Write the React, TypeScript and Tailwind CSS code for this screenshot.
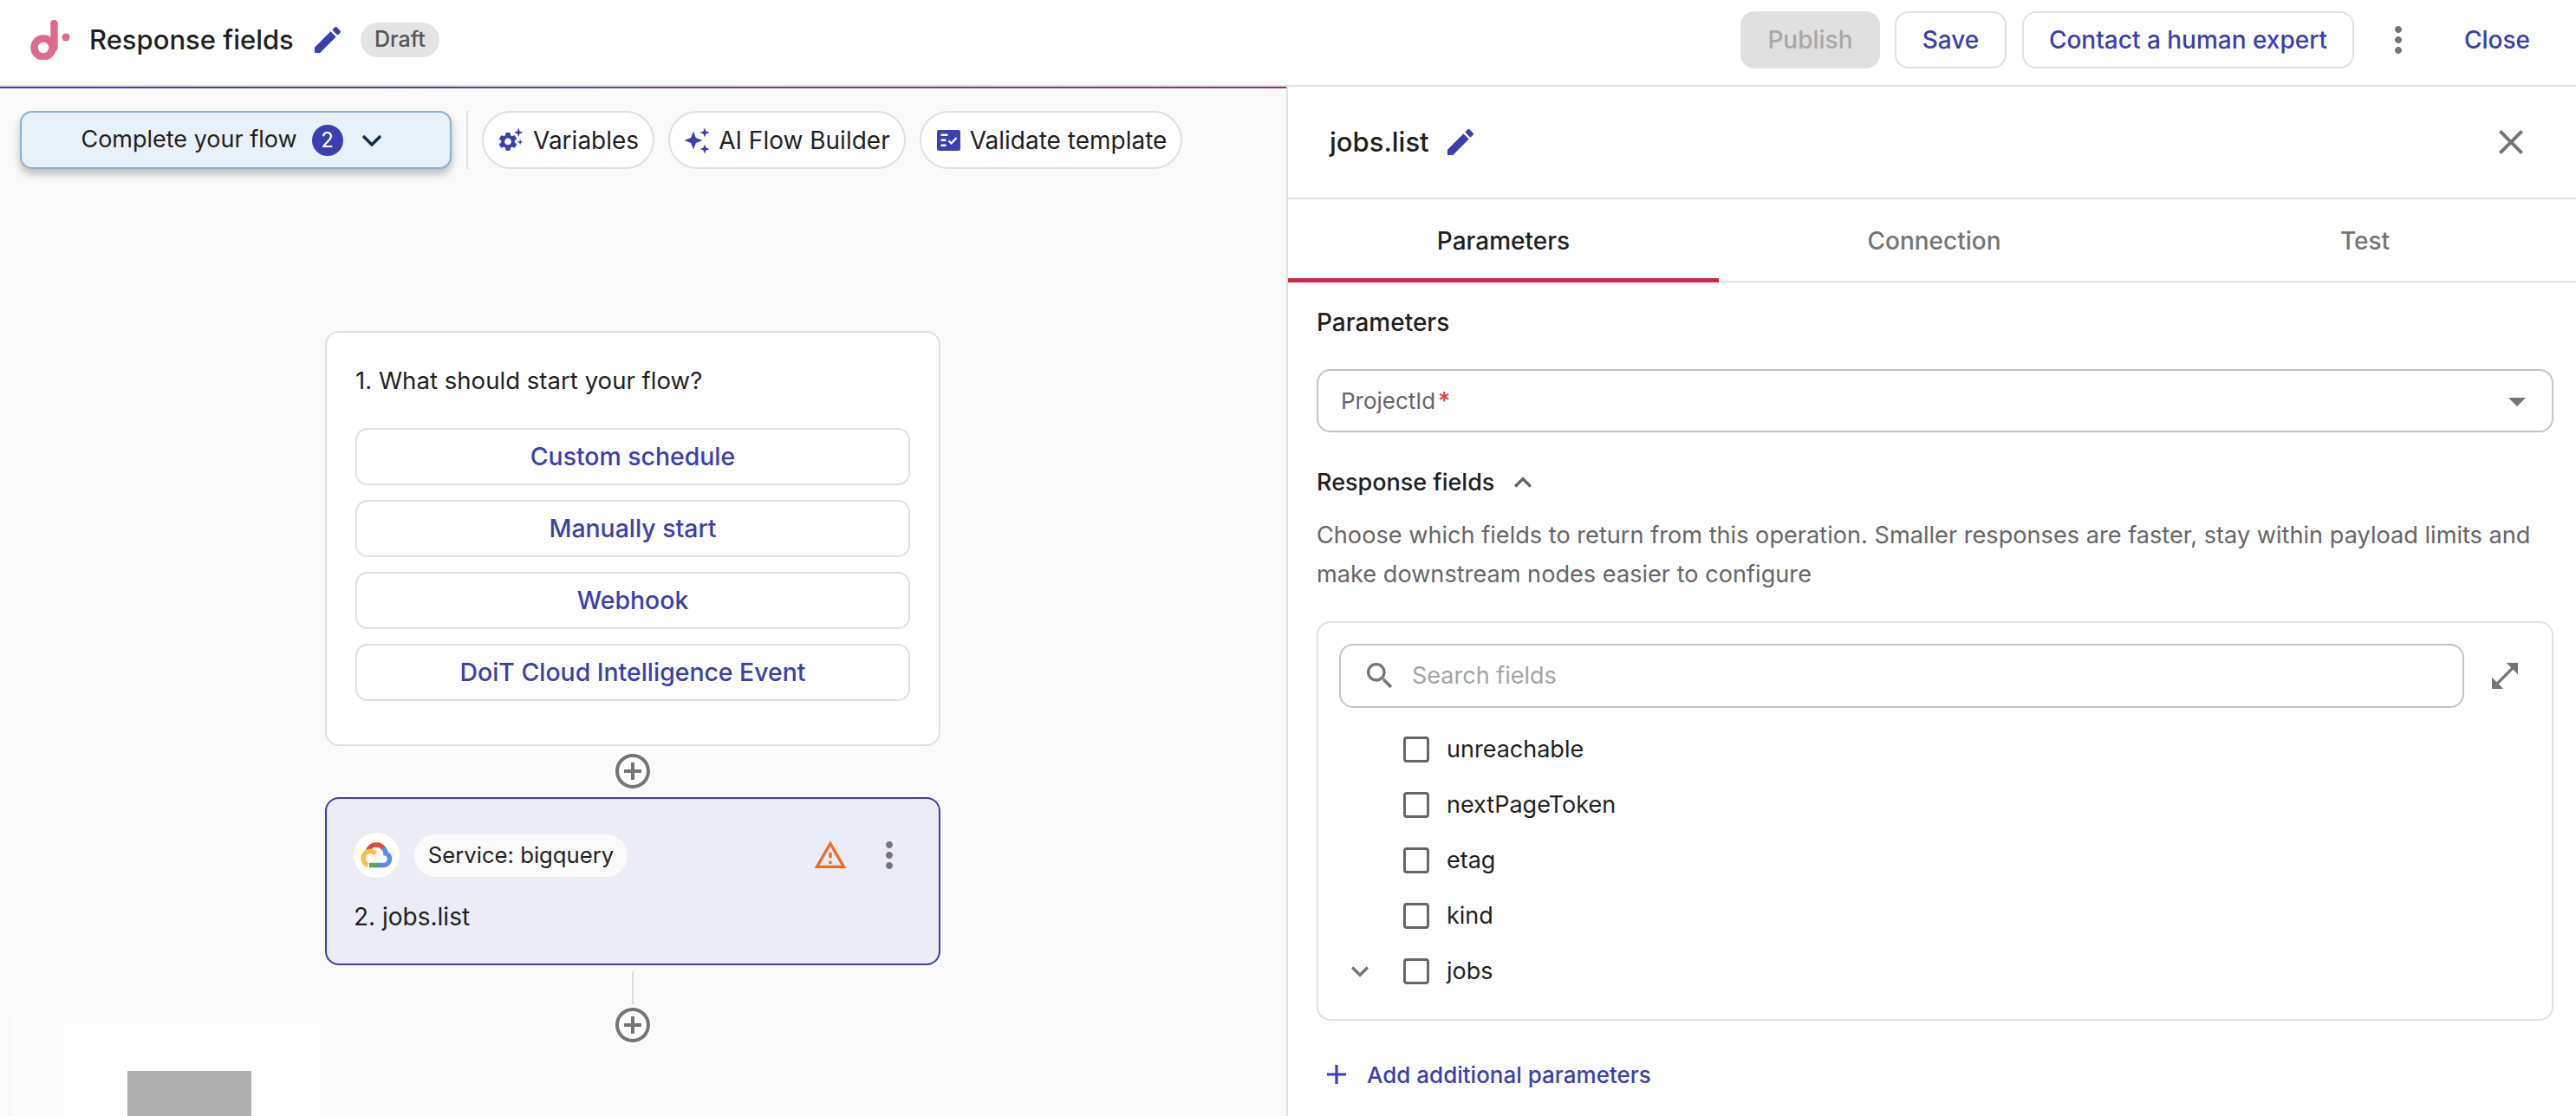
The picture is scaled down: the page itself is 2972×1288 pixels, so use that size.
import type { ReactNode } from "react";

const PATHS = {
  edit: "M3 17.25V21h3.75L17.81 9.94l-3.75-3.75L3 17.25zM20.71 7.04c.39-.39.39-1.02 0-1.41l-2.34-2.34c-.39-.39-1.02-.39-1.41 0l-1.83 1.83 3.75 3.75 1.83-1.83z",
  more: "M12 8c1.1 0 2-.9 2-2s-.9-2-2-2-2 .9-2 2 .9 2 2 2zm0 2c-1.1 0-2 .9-2 2s.9 2 2 2 2-.9 2-2-.9-2-2-2zm0 6c-1.1 0-2 .9-2 2s.9 2 2 2 2-.9 2-2-.9-2-2-2z",
  close: "M19 6.41 17.59 5 12 10.59 6.41 5 5 6.41 10.59 12 5 17.59 6.41 19 12 13.41 17.59 19 19 17.59 13.41 12z",
  full: "M21 11V3h-8l3.29 3.29-10 9.99L3 13v8h8l-3.29-3.29 10-9.99z",
  drop: "m7 10 5 5 5-5z",
  addCircle: "M13 7h-2v4H7v2h4v4h2v-4h4v-2h-4V7zm-1-5C6.48 2 2 6.48 2 12s4.48 10 10 10 10-4.48 10-10S17.52 2 12 2zm0 18c-4.41 0-8-3.59-8-8s3.59-8 8-8 8 3.59 8 8-3.59 8-8 8z",
  warn: "M12 5.99 19.53 19H4.47L12 5.99M12 2 1 21h22L12 2zm1 14h-2v2h2v-2zm0-6h-2v4h2v-4z",
  search: "M15.5 14h-.79l-.28-.27C15.41 12.59 16 11.11 16 9.5 16 5.91 13.09 3 9.5 3S3 5.91 3 9.5 5.91 16 9.5 16c1.61 0 3.09-.59 4.23-1.57l.27.28v.79l5 4.99L20.49 19l-4.99-5zm-6 0C7.01 14 5 11.99 5 9.5S7.01 5 9.5 5 14 7.01 14 9.5 11.99 14 9.5 14z",
  down: "M7.41 8.59 12 13.17l4.59-4.58L18 10l-6 6-6-6 1.41-1.41z",
  up: "M7.41 15.41 12 10.83l4.59 4.58L18 14l-6-6-6 6z",
  add: "M19 13h-6v6h-2v-6H5v-2h6V5h2v6h6v2z",
};

function Icon({ d, className }: { d: string; className: string }) {
  return (
    <svg viewBox="0 0 24 24" fill="currentColor" className={className}>
      <path d={d} />
    </svg>
  );
}

function Logo() {
  return (
    <svg viewBox="0 0 46 46" className="w-[46px] h-[46px]">
      <circle cx="15" cy="32" r="10.500" fill="none" stroke="#de6a8d" strokeWidth="8.500" />
      <path d="M27.500 4V32" stroke="#de6a8d" strokeWidth="8.500" strokeLinecap="round" />
      <circle cx="41" cy="20" r="4.500" fill="#de6a8d" />
    </svg>
  );
}

function GearSpark() {
  return (
    <svg viewBox="0 0 31 34" fill="#3b3fb0" className="w-[30px] h-[34px]">
      <g transform="translate(-1 5) scale(1.12)">
        <path d="M19.14 12.94c.04-.3.06-.61.06-.94 0-.32-.02-.64-.07-.94l2.03-1.58c.18-.14.23-.41.12-.61l-1.92-3.32c-.12-.22-.37-.29-.59-.22l-2.39.96c-.5-.38-1.03-.7-1.62-.94l-.36-2.54c-.04-.24-.24-.41-.48-.41h-3.84c-.24 0-.43.17-.47.41l-.36 2.54c-.59.24-1.13.57-1.62.94l-2.39-.96c-.22-.08-.47 0-.59.22L2.74 8.87c-.12.21-.08.47.12.61l2.03 1.58c-.05.3-.09.63-.09.94s.02.64.07.94l-2.03 1.58c-.18.14-.23.41-.12.61l1.92 3.32c.12.22.37.29.59.22l2.39-.96c.5.38 1.03.7 1.62.94l.36 2.54c.05.24.24.41.48.41h3.84c.24 0 .44-.17.47-.41l.36-2.54c.59-.24 1.13-.56 1.62-.94l2.39.96c.22.08.47 0 .59-.22l1.92-3.32c.12-.22.07-.47-.12-.61l-2.01-1.58zM12 15.6c-1.98 0-3.6-1.62-3.6-3.6s1.62-3.6 3.6-3.6 3.6 1.62 3.6 3.6-1.62 3.6-3.6 3.6z" />
      </g>
      <path d="M25 2l1.400 4.100L30.500 7.500l-4.100 1.400L25 13l-1.400-4.100L19.500 7.500l4.100-1.400z" />
      <path d="M27 15.500l.9 2.600 2.600.9-2.600.9-.9 2.600-.9-2.600-2.600-.9 2.600-.9z" />
    </svg>
  );
}

function Sparkles() {
  return (
    <svg viewBox="0 0 29 36" fill="#3b3fb0" className="w-[29px] h-[36px]">
      <path d="M11 7.500l2.900 7.600L21.500 18l-7.600 2.900L11 28.500l-2.900-7.600L.5 18l7.600-2.900z" />
      <path d="M24 3.500l1.500 4 4 1.500-4 1.500-1.500 4-1.500-4-4-1.500 4-1.500z" />
      <path d="M24 22.500l1.500 4 4 1.500-4 1.500-1.500 4-1.500-4-4-1.500 4-1.500z" />
    </svg>
  );
}

function ChecklistBox() {
  return (
    <svg viewBox="0 0 27 24" className="ml-[2px] w-[27px] h-[24px]">
      <rect width="27" height="24" rx="2.500" fill="#3b3fb0" />
      <path d="M4.500 4.500h8v2.500h-8zM4.500 10.500h6v2.500h-6zM4.500 16.500h6v2.500h-6z" fill="#fff" />
      <path d="M13.500 12.500l3 3 6-6.500" fill="none" stroke="#fff" strokeWidth="2.200" />
    </svg>
  );
}

function GoogleCloud() {
  return (
    <svg viewBox="0 0 37 30" className="w-[37px] h-[30px]" fill="none" strokeWidth="5.500">
      <path d="M8 11C9.500 5.500 14 3 18 3c4 0 7 2 8.500 4.500" stroke="#db4b3f" />
      <path d="M26 6.500c2 2 3 4.200 3 6.500 3 1 4.500 3.500 4.500 6 0 4.500-3.500 7.500-7.500 7.500h-6" stroke="#5b8def" />
      <path d="M21 26.500H10" stroke="#58a65c" />
      <path d="M17.500 13c-2-1.500-4-2.500-6.500-2.500C6.500 10.500 3 14 3 18.500 3 22 5 25 8.500 26.500" stroke="#f6c042" />
    </svg>
  );
}

function Pill({ icon, label }: { icon: ReactNode; label: string }) {
  return (
    <button className="h-[67px] px-[16px] flex items-center gap-[11px] rounded-full border-2 border-[#e0e0e0] bg-white text-[28px] text-[#1f1f1f]">
      {icon}
      {label}
    </button>
  );
}

function PlusNode() {
  return (
    <div className="w-[44px] h-[44px] flex items-center justify-center rounded-full bg-white text-[#757575]">
      <Icon d={PATHS.addCircle} className="w-[48px] h-[48px] shrink-0" />
    </div>
  );
}

function TriggerOption({ label }: { label: string }) {
  return (
    <button className="h-[66px] rounded-[14px] border-2 border-[#e0e0e0] bg-white text-[28.4px] font-medium text-[#3b3fb0]">
      {label}
    </button>
  );
}

function FieldRow({ name, expandable }: { name: string; expandable?: boolean }) {
  return (
    <div className="h-[64px] pl-[28px] flex items-center">
      <div className="w-[40px] h-[40px] text-[#757575]">
        {expandable && <Icon d={PATHS.down} className="w-[40px] h-[40px]" />}
      </div>
      <div className="ml-[30px] w-[30px] h-[30px] rounded-[4px] border-[3px] border-[#666666]" />
      <span className="ml-[20px] text-[27px] text-[#1f1f1f]">{name}</span>
    </div>
  );
}

export default function App() {
  return (
    <div className="w-[2972px] h-[1288px] overflow-hidden bg-white flex flex-col font-['Inter',sans-serif]">
      <header className="h-[100px] shrink-0 border-b-2 border-[#e0e0e0] pl-[35px] pr-[53px] pb-[6px] flex items-center">
        <Logo />
        <span className="ml-[22px] text-[31px] font-medium text-[#1f1f1f]">Response fields</span>
        <Icon d={PATHS.edit} className="ml-[19px] w-[40px] h-[40px] text-[#3b3fb0]" />
        <span className="ml-[18px] h-[40px] w-[91px] flex items-center justify-center rounded-full bg-[#e4e4e4] text-[25px] font-medium text-[#555555]">
          Draft
        </span>
        <button className="ml-auto w-[161px] h-[66px] rounded-[16px] bg-[#e0e0e0] text-[28px] font-medium text-[#a8a8a8]">
          Publish
        </button>
        <button className="ml-[17px] w-[129px] h-[66px] rounded-[16px] border-2 border-[#e0e0e0] text-[28px] font-medium text-[#3b3fb0]">
          Save
        </button>
        <button className="ml-[18px] w-[383px] h-[66px] rounded-[16px] border-2 border-[#e0e0e0] text-[28px] font-medium text-[#3b3fb0]">
          Contact a human expert
        </button>
        <Icon d={PATHS.more} className="ml-[27px] w-[48px] h-[48px] text-[#757575]" />
        <span className="ml-[52px] text-[28px] font-medium text-[#3b3fb0]">Close</span>
      </header>

      <div className="flex-1 flex min-h-0">
        <main className="relative w-[1484px] shrink-0 bg-[#fafafa] overflow-hidden">
          <div className="h-[2px] bg-gradient-to-r from-[#3b3fb0] to-[#8f3474]" />

          <div className="mt-[26px] ml-[23px] flex items-stretch">
            <button className="w-[498px] h-[67px] pr-[10px] flex items-center justify-center rounded-[14px] border-2 border-[#8ab0d8] bg-[#e9f1f8] shadow-[0_6px_10px_rgba(0,0,0,0.25)] text-[27px] text-[#1f1f1f]">
              Complete your flow
              <span className="ml-[17px] w-[36px] h-[36px] rounded-full bg-[#3b3fb0] flex items-center justify-center text-[24px] text-white">
                2
              </span>
              <svg viewBox="0 0 24 14" fill="none" stroke="#10304c" strokeWidth="3.500" className="ml-[21px] w-[24px] h-[14px]">
                <path d="M2 2l10 10L22 2" />
              </svg>
            </button>
            <div className="ml-[17px] w-[2px] bg-[#e0e0e0]" />
            <div className="ml-[16px] flex gap-[16px]">
              <Pill icon={<GearSpark />} label="Variables" />
              <Pill icon={<Sparkles />} label="AI Flow Builder" />
              <Pill icon={<ChecklistBox />} label="Validate template" />
            </div>
          </div>

          <div className="mt-[187px] ml-[375px] w-[710px] flex flex-col items-center">
            <div className="w-full h-[479px] rounded-[16px] border-2 border-[#e0e0e0] bg-white px-[33px] pt-[36px]">
              <div className="h-[40px] flex items-center text-[27.6px] text-[#1f1f1f]">1. What should start your flow?</div>
              <div className="mt-[34px] flex flex-col gap-[17px]">
                <TriggerOption label="Custom schedule" />
                <TriggerOption label="Manually start" />
                <TriggerOption label="Webhook" />
                <TriggerOption label="DoiT Cloud Intelligence Event" />
              </div>
            </div>

            <div className="mt-[7px]">
              <PlusNode />
            </div>

            <div className="mt-[8px] w-full h-[194px] rounded-[16px] border-2 border-[#3b3fb0] bg-[#ebecf5] pl-[31px] pr-[33px] pt-[39px]">
              <div className="flex items-center">
                <div className="w-[53px] h-[52px] rounded-full bg-white flex items-center justify-center">
                  <GoogleCloud />
                </div>
                <span className="ml-[17px] w-[246px] h-[49px] rounded-full bg-[#fafafa] flex items-center justify-center text-[25.7px] text-[#1f1f1f]">
                  Service: bigquery
                </span>
                <Icon d={PATHS.warn} className="ml-auto w-[40px] h-[40px] text-[#e2712c]" />
                <Icon d={PATHS.more} className="ml-[24px] w-[48px] h-[48px] text-[#757575]" />
              </div>
              <div className="mt-[25px] h-[40px] flex items-center text-[28px] text-[#1f1f1f]">2. jobs.list</div>
            </div>

            <div className="mt-[7px] w-[2px] h-[38px] bg-[#dddddd]" />
            <div className="mt-[2px]">
              <PlusNode />
            </div>
          </div>

          {/* minimap, sits over the canvas */}
          <div className="absolute left-[15px] top-[1070px] w-[402px] h-[120px] bg-[#fcfcfc] pl-[55px] pt-[8px]">
            <div className="w-[300px] h-[120px] bg-[#fdfdfd] pl-[77px] pt-[58px]">
              <div className="w-[143px] h-[60px] bg-[#b0b0b0]" />
            </div>
          </div>
        </main>

        <aside className="flex-1 min-w-0 border-l-2 border-[#e0e0e0] bg-white flex flex-col">
          <div className="h-[130px] shrink-0 border-b-2 border-[#e0e0e0] pl-[48px] pr-[51px] flex items-center">
            <span className="text-[31px] font-medium text-[#1f1f1f]">jobs.list</span>
            <Icon d={PATHS.edit} className="ml-[16px] w-[40px] h-[40px] text-[#3b3fb0]" />
            <Icon d={PATHS.close} className="ml-auto w-[48px] h-[48px] text-[#757575]" />
          </div>

          <div className="h-[96px] shrink-0 border-b-2 border-[#e0e0e0] flex">
            <div className="w-[497px] shrink-0 pt-[4px] border-b-[5px] border-[#c92a4d] -mb-[2px] flex items-center justify-center text-[28px] font-medium text-[#1f1f1f]">
              Parameters
            </div>
            <div className="w-[497px] shrink-0 pt-[2px] flex items-center justify-center text-[28px] font-medium text-[#757575]">Connection</div>
            <div className="w-[497px] shrink-0 pt-[2px] flex items-center justify-center text-[28px] font-medium text-[#757575]">Test</div>
          </div>

          <div className="pl-[33px] pr-[26px] pt-[26px]">
            <div className="h-[40px] flex items-center text-[28px] font-medium text-[#1f1f1f]">Parameters</div>

            <div className="mt-[34px] h-[73px] rounded-[16px] border-2 border-[#c4c4c4] pl-[26px] pr-[16px] flex items-center text-[26px] text-[#666666]">
              ProjectId
              <span className="ml-[3px] text-[28px] text-[#e5392f]">*</span>
              <Icon d={PATHS.drop} className="ml-auto w-[48px] h-[48px] text-[#757575]" />
            </div>

            <div className="mt-[38px] h-[40px] flex items-center text-[27px] font-medium text-[#1f1f1f]">
              Response fields
              <Icon d={PATHS.up} className="ml-[13px] w-[40px] h-[40px] text-[#666666]" />
            </div>

            <p className="mt-[18px] text-[27.15px] leading-[45px] text-[#666666]">
              Choose which fields to return from this operation. Smaller responses are faster, stay within payload limits and
              make downstream nodes easier to configure
            </p>

            <div className="mt-[32px] h-[461px] rounded-[16px] border-2 border-[#e0e0e0] pt-[24px]">
              <div className="flex items-center pl-[24px]">
                <div className="w-[1298px] h-[74px] rounded-[16px] border-2 border-[#c4c4c4] pl-[25px] flex items-center text-[27px] text-[#a3a3a3]">
                  <Icon d={PATHS.search} className="w-[40px] h-[40px] text-[#757575]" />
                  <span className="ml-[17px]">Search fields</span>
                </div>
                <Icon d={PATHS.full} className="ml-[27px] w-[40px] h-[40px] text-[#757575]" />
              </div>
              <div className="mt-[16px]">
                <FieldRow name="unreachable" />
                <FieldRow name="nextPageToken" />
                <FieldRow name="etag" />
                <FieldRow name="kind" />
                <FieldRow name="jobs" expandable />
              </div>
            </div>

            <div className="mt-[42px] h-[40px] pl-[4px] flex items-center text-[26px] font-medium text-[#3b3fb0]">
              <Icon d={PATHS.add} className="w-[38px] h-[38px]" />
              <span className="ml-[16px]">Add additional parameters</span>
            </div>
          </div>
        </aside>
      </div>
    </div>
  );
}
